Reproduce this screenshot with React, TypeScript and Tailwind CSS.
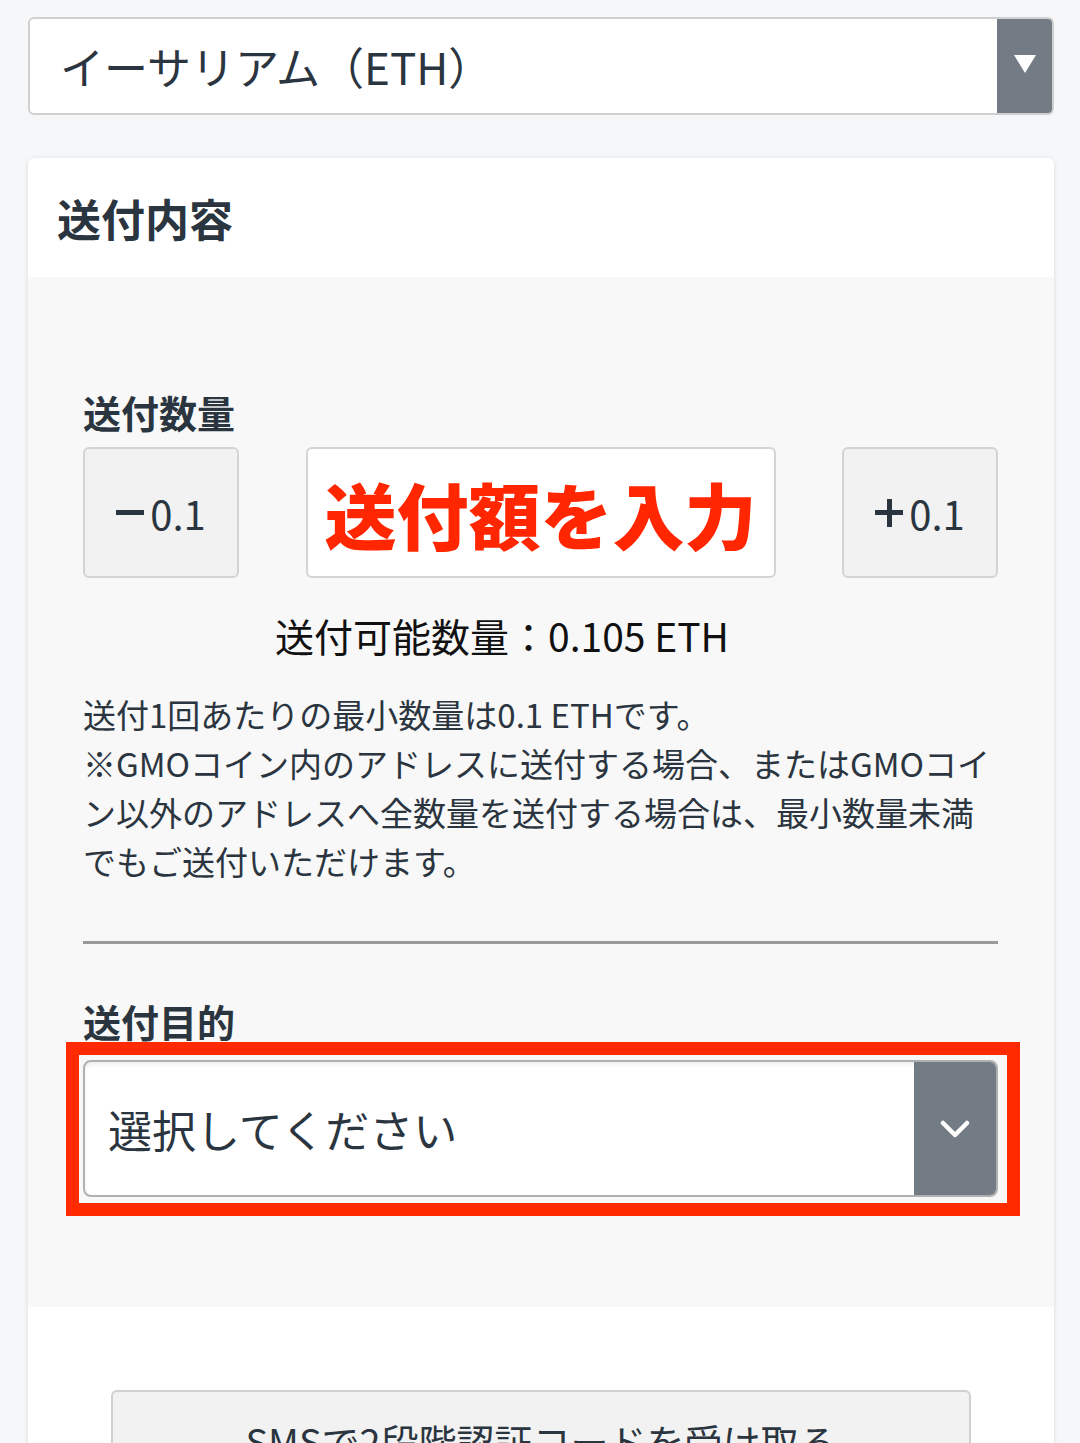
import { useState } from 'react';

export default function App() {
  const [amount] = useState('');

  return (
    <div className="min-h-[1443px] overflow-hidden bg-[#f6f7f8] pl-[28px] pr-[26px] pt-[17px] font-['Noto_Sans_CJK_JP','Noto_Sans',sans-serif] text-[#2b3540]">
      {/* Coin select */}
      <div className="flex h-[98px] overflow-hidden rounded-[6px] border-2 border-[#d0d0d0] bg-white">
        <div className="flex flex-1 items-center pl-[30px] text-[44px] leading-none">イーサリアム（ETH）</div>
        <div className="flex w-[55px] items-center justify-center bg-[#737b84]">
          <svg width="22" height="18" viewBox="0 0 22 18" className="-mt-[4px]">
            <polygon points="0,0 22,0 11,18" fill="#fff" />
          </svg>
        </div>
      </div>

      {/* Card */}
      <div className="mt-[43px] overflow-hidden rounded-t-[6px] bg-white shadow-[0_1px_5px_rgba(0,0,0,0.12)]">
        <div className="flex h-[119px] items-center pl-[29px] text-[44px] font-bold">送付内容</div>

        <div className="bg-[#f8f8f8] pl-[55px] pr-[56px] pt-[111px] pb-[110px]">
          <div className="text-[38px] font-bold leading-[48px]">送付数量</div>

          <div className="mt-[11px] flex h-[131px] justify-between">
            <button className="flex w-[156px] items-center justify-center rounded-[6px] border-2 border-[#d4d4d4] bg-[#f2f2f2] text-[40px] text-[#2b3540]">
              <span className="mr-[6px] h-[5px] w-[28px] bg-[#2b3540]" />
              <span>0.1</span>
            </button>
            <div className="flex w-[470px] items-center justify-center rounded-[6px] border-2 border-[#d4d4d4] bg-white">
              <span className="text-[72px] font-black leading-none text-[#ff2600]">{amount || '送付額を入力'}</span>
            </div>
            <button className="flex w-[156px] items-center justify-center rounded-[6px] border-2 border-[#d4d4d4] bg-[#f2f2f2] text-[40px] text-[#2b3540]">
              <span className="relative mr-[6px] h-[28px] w-[28px]">
                <span className="absolute left-0 top-[11.5px] h-[5px] w-[28px] bg-[#2b3540]" />
                <span className="absolute left-[11.5px] top-0 h-[28px] w-[5px] bg-[#2b3540]" />
              </span>
              <span>0.1</span>
            </button>
          </div>

          <div className="mt-[33px] pl-[192px] text-[39px] leading-[48px] text-[#111]">送付可能数量：0.105 ETH</div>

          <p className="mt-[31px] text-[33px] leading-[49px]">
            送付1回あたりの最小数量は0.1 ETHです。
            <br />
            ※GMOコイン内のアドレスに送付する場合、またはGMOコイン以外のアドレスへ全数量を送付する場合は、最小数量未満でもご送付いただけます。
          </p>

          <div className="mt-[55px] h-[3px] bg-[#9a9a9a]" />

          <div className="mt-[53px] text-[38px] font-bold leading-[48px]">送付目的</div>

          <div className="relative mt-[15px]">
            <div className="flex h-[137px] overflow-hidden rounded-[8px] border-2 border-[#b0b0b0] bg-white shadow-[inset_0_3px_4px_rgba(0,0,0,0.06)]">
              <div className="flex flex-1 items-center pl-[23px] text-[44px] leading-none">選択してください</div>
              <div className="flex w-[82px] items-center justify-center bg-[#737b84]">
                <svg width="30" height="18" viewBox="0 0 30 18">
                  <polyline points="3,3 15,15 27,3" fill="none" stroke="#fff" strokeWidth="4.5" strokeLinecap="round" strokeLinejoin="round" />
                </svg>
              </div>
            </div>
            {/* annotation box */}
            <div className="pointer-events-none absolute -left-[17px] -right-[22px] -top-[18px] -bottom-[19px] border-[13px] border-[#ff2a00]" />
          </div>
        </div>

        <div className="px-[83px] pt-[83px] pb-[40px]">
          <button className="flex h-[100px] w-full items-center justify-center rounded-[6px] border-2 border-[#d0d0d0] bg-[#f2f2f2] text-[38px] text-[#2b3540]">
            SMSで2段階認証コードを受け取る
          </button>
        </div>
      </div>
    </div>
  );
}
